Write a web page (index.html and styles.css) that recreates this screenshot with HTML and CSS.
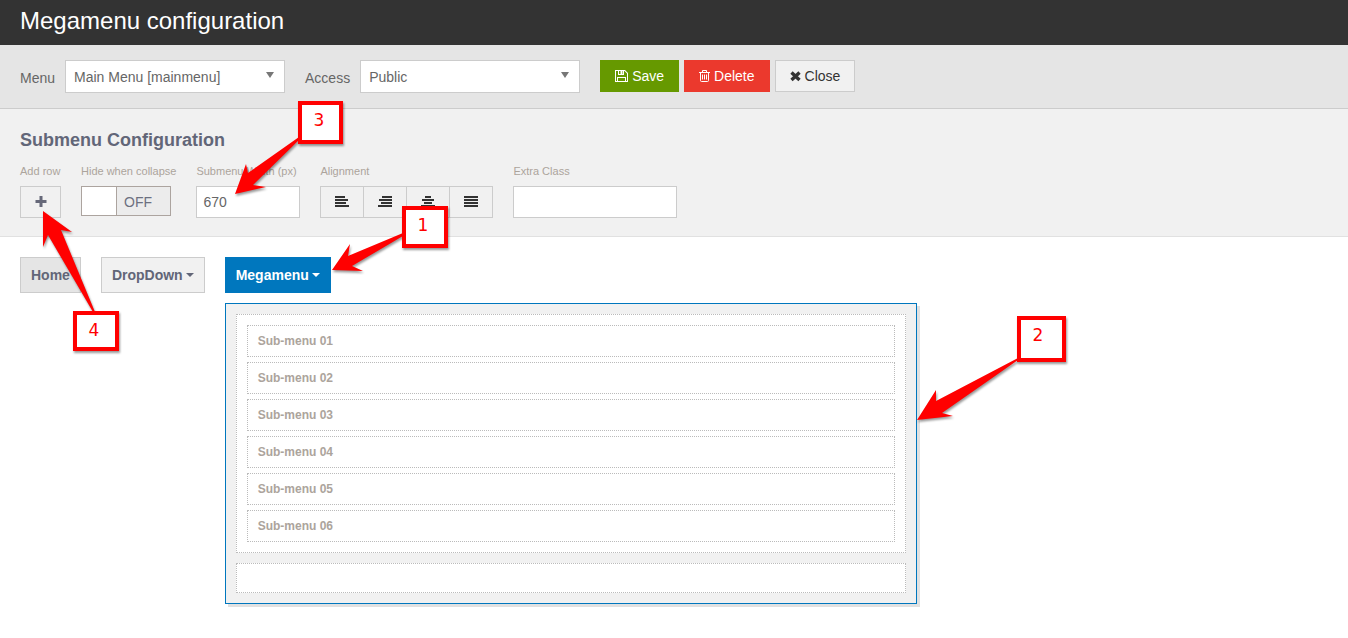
FILE: index.html
```html
<!DOCTYPE html>
<html lang="en">
<head>
  <meta charset="UTF-8">
  <meta name="viewport" content="width=device-width, initial-scale=1.0">
  <title>Megamenu configuration</title>
  <link rel="stylesheet" href="styles.css">
</head>
<body>

  <header class="page-header">
    <h1>Megamenu configuration</h1>
  </header>

  <form class="toolbar">
    <label for="menu">Menu</label>
    <div class="select-box">
      <select id="menu">
        <option>Main Menu [mainmenu]</option>
      </select>
    </div>
    <label for="access">Access</label>
    <div class="select-box">
      <select id="access">
        <option>Public</option>
      </select>
    </div>
    <div class="actions">
      <button type="button" class="btn btn-save">
        <svg width="13" height="12" viewBox="0 0 13 12">
          <path fill-rule="evenodd" d="M0 0h10l3 3v9H0zM1 1v10h1V7h9v4h1V3.500L9.500 1H9v4H3V1zM4 1v3h1.500V1zM7.500 1v3H8V1zM3 8v3h7V8z" fill="currentColor"/>
        </svg>
        Save
      </button>
      <button type="button" class="btn btn-delete">
        <svg width="11" height="12" viewBox="0 0 11 12" fill="none" stroke="currentColor" stroke-width="1">
          <path d="M0 2.500h11M3.500 2.500v-2h4v2M1.500 2.500v8q0 1 1 1h6q1 0 1-1v-8M3.500 4.500v5M5.500 4.500v5M7.500 4.500v5"/>
        </svg>
        Delete
      </button>
      <button type="button" class="btn">
        <svg width="11" height="12" viewBox="0 0 11 12" fill="none" stroke="currentColor" stroke-width="3.400">
          <path d="M1.500 2.500l8 7.500M9.500 2.500l-8 7.500"/>
        </svg>
        Close
      </button>
    </div>
  </form>

  <section class="config">
    <h2>Submenu Configuration</h2>
    <div class="fields">
      <div class="field">
        <label for="addRow">Add row</label>
        <button type="button" id="addRow" class="icon-btn add-row" aria-label="Add row">
          <svg width="12" height="12" viewBox="0 0 12 12"><path d="M4.500 0h3v4h4v3h-4v4h-3v-4h-4v-3h4z"/></svg>
        </button>
      </div>
      <div class="field">
        <label for="hideCollapse">Hide when collapse</label>
        <label class="toggle">
          <input type="checkbox" id="hideCollapse">
          <span>OFF</span>
        </label>
      </div>
      <div class="field">
        <label for="submenuWidth">Submenu Width (px)</label>
        <input type="text" id="submenuWidth" class="input-width" value="670">
      </div>
      <div class="field">
        <span class="field-label">Alignment</span>
        <div class="align-group" role="group" aria-label="Alignment">
          <button type="button" class="icon-btn" aria-label="Left">
            <svg width="14" height="12" viewBox="0 0 14 12"><path d="M0 0h10v2H0zM0 3h13v2H0zM0 6h11v2H0zM0 9h14v2H0z"/></svg>
          </button>
          <button type="button" class="icon-btn" aria-label="Right">
            <svg width="14" height="12" viewBox="0 0 14 12"><path d="M4 0h10v2H4zM1 3h13v2H1zM3 6h11v2H3zM0 9h14v2H0z"/></svg>
          </button>
          <button type="button" class="icon-btn" aria-label="Center">
            <svg width="14" height="12" viewBox="0 0 14 12"><path d="M4 0h6v2H4zM1 3h12v2H1zM3 6h8v2H3zM0 9h14v2H0z"/></svg>
          </button>
          <button type="button" class="icon-btn" aria-label="Justify">
            <svg width="14" height="12" viewBox="0 0 14 12"><path d="M0 0h14v2H0zM0 3h14v2H0zM0 6h14v2H0zM0 9h14v2H0z"/></svg>
          </button>
        </div>
      </div>
      <div class="field">
        <label for="extraClass">Extra Class</label>
        <input type="text" id="extraClass" class="input-class">
      </div>
    </div>
  </section>

  <ul class="menu">
    <li><a href="#" class="menu-item current">Home</a></li>
    <li><a href="#" class="menu-item">DropDown<span class="caret"></span></a></li>
    <li>
      <a href="#" class="menu-item selected">Megamenu<span class="caret"></span></a>
      <div class="submenu">
        <div class="row">
          <a href="#" class="sub-item">Sub-menu 01</a>
          <a href="#" class="sub-item">Sub-menu 02</a>
          <a href="#" class="sub-item">Sub-menu 03</a>
          <a href="#" class="sub-item">Sub-menu 04</a>
          <a href="#" class="sub-item">Sub-menu 05</a>
          <a href="#" class="sub-item">Sub-menu 06</a>
        </div>
        <div class="row"></div>
      </div>
    </li>
  </ul>

  <!-- numbered callouts -->
  <svg class="callouts" width="1348" height="638" viewBox="0 0 1348 638">
    <g class="arrows">
      <path d="M403 233L348 256L350 244L332 270L363 271L352 266L403 236Z"/>
      <path d="M1018 358L936 401L936 390L917 420L953 416L942 413L1018 360Z"/>
      <path d="M299 137L248 173L246 164L235 194L266 187L253 185L299 140Z"/>
      <path d="M93 312L48 235L43 247L43 211L72 232L61 230L95 312Z"/>
    </g>
    <g class="boxes">
      <rect x="404" y="208" width="42" height="38"/>
      <rect x="1019" y="318" width="45" height="42"/>
      <rect x="300" y="103" width="41" height="39"/>
      <rect x="75" y="313" width="42" height="36"/>
    </g>
    <g class="numbers">
      <text x="423" y="231">1</text>
      <text x="1038" y="341">2</text>
      <text x="319" y="126">3</text>
      <text x="94" y="336">4</text>
    </g>
  </svg>

</body>
</html>
```

FILE: styles.css
```css
* {
  box-sizing: border-box;
}

body {
  margin: 0;
  background: #fff;
  color: #666;
  font-family: "Liberation Sans", Arial, sans-serif;
  font-size: 14px;
  line-height: 20px;
  position: relative;
}

button,
input,
select {
  font: inherit;
  color: inherit;
  border: 1px solid #ccc;
  border-radius: 0;
  margin: 0;
}

a {
  text-decoration: none;
}

.page-header {
  background: #333;
  padding: 6px 20px 9px;
}

h1 {
  margin: 0;
  color: #fff;
  font-size: 24px;
  font-weight: 400;
  line-height: 30px;
}

/* Toolbar */
.toolbar {
  display: flex;
  align-items: center;
  padding: 15px 20px;
  background: #e5e5e5;
  border-bottom: 1px solid #ccc;
}

.toolbar label {
  padding-top: 2px;
  margin-right: 10px;
}

.select-box {
  position: relative;
  width: 220px;
  margin-right: 20px;
}

.select-box select {
  display: block;
  appearance: none;
  width: 100%;
  height: 33px;
  padding: 0 8px;
  background: #fff;
}

.select-box::after {
  content: "";
  position: absolute;
  right: 11px;
  top: 12px;
  border: 4px solid transparent;
  border-top: 6px solid #777;
  border-bottom: 0;
  pointer-events: none;
}

.actions {
  display: flex;
  gap: 5px;
  align-self: flex-start;
}

.btn {
  display: flex;
  align-items: center;
  gap: 4px;
  height: 32px;
  padding: 0 14px;
  background: #f1f1f1;
  color: #333;
  cursor: pointer;
}

.btn-save {
  background: #690;
  border-color: #690;
  color: #fff;
}

.btn-delete {
  background: #eb392d;
  border-color: #eb392d;
  color: #fff;
}

/* Submenu configuration */
.config {
  padding: 21px 20px 18px;
  background: #f1f1f1;
  border-bottom: 1px solid #e1e1e1;
}

h2 {
  margin: 0 0 14px;
  font-size: 18px;
  line-height: 20px;
  color: #626678;
}

.fields {
  display: flex;
  gap: 20px;
}

.field {
  display: flex;
  flex-direction: column;
  align-items: flex-start;
  gap: 8px;
}

.field > label:first-child,
.field-label {
  color: #aca49c;
  font-size: 11px;
  line-height: 14px;
}

.field input[type="text"] {
  height: 32px;
  padding: 0 6px;
  background: #fff;
}

.field .input-width {
  width: 104px;
}

.field .input-class {
  width: 164px;
}

.icon-btn {
  display: flex;
  align-items: center;
  justify-content: center;
  width: 44px;
  height: 32px;
  padding: 0;
  background: #f1f1f1;
  cursor: pointer;
}

.icon-btn path {
  fill: #333;
}

.add-row {
  width: 41px;
}

.add-row path {
  fill: #666879;
}

.align-group {
  display: flex;
}

.align-group .icon-btn + .icon-btn {
  margin-left: -1px;
}

.toggle {
  display: flex;
  align-items: center;
  width: 90px;
  height: 30px;
  background: #ececec;
  border: 1px solid #aca49f;
}

.toggle input {
  appearance: none;
  width: 35px;
  height: 28px;
  background: #fff;
  border: 0;
  border-right: 1px solid #aca49f;
}

.toggle span {
  padding: 2px 0 0 7px;
  color: #6c7080;
}

/* Menu preview */
.menu {
  display: flex;
  align-items: flex-start;
  gap: 20px;
  margin: 0;
  padding: 20px;
  list-style: none;
}

.menu li {
  display: flex;
  flex-direction: column;
  align-items: flex-start;
  gap: 10px;
}

.menu-item {
  display: flex;
  align-items: center;
  gap: 3px;
  height: 36px;
  padding: 0 10px;
  background: #f1f1f1;
  border: 1px solid #ccc;
  color: #626678;
  font-weight: 700;
}

.menu-item.current {
  background: #e5e5e5;
}

.menu-item.selected {
  background: #0077be;
  border-color: #0077be;
  color: #fff;
}

.caret {
  border: 4px solid transparent;
  border-top-color: currentColor;
  border-bottom: 0;
}

.submenu {
  display: flex;
  flex-direction: column;
  gap: 10px;
  width: 692px;
  padding: 10px;
  background: #f1f1f1;
  border: 1px solid #0077be;
  box-shadow: 3px 3px 0 #e1e1e1;
}

.row {
  display: flex;
  flex-direction: column;
  gap: 5px;
  min-height: 30px;
  padding: 10px;
  background: #fff;
  border: 1px dotted #bbb;
}

.row:empty {
  padding: 0;
}

.sub-item {
  padding: 5px 10px;
  border: 1px dotted #bbb;
  color: #aca49c;
  font-size: 12px;
  font-weight: 700;
}

/* Callouts */
.callouts {
  position: absolute;
  top: 0;
  left: 0;
  pointer-events: none;
}

.arrows {
  fill: #f00;
  filter: drop-shadow(1px 2px 1px rgba(0, 0, 0, 0.4));
}

.boxes {
  fill: #fff;
  stroke: #f00;
  stroke-width: 4px;
  filter: drop-shadow(1px 2px 1px rgba(0, 0, 0, 0.4));
}

.numbers {
  fill: #f00;
  font-family: "DejaVu Sans", sans-serif;
  font-size: 17px;
  text-anchor: middle;
}
```
